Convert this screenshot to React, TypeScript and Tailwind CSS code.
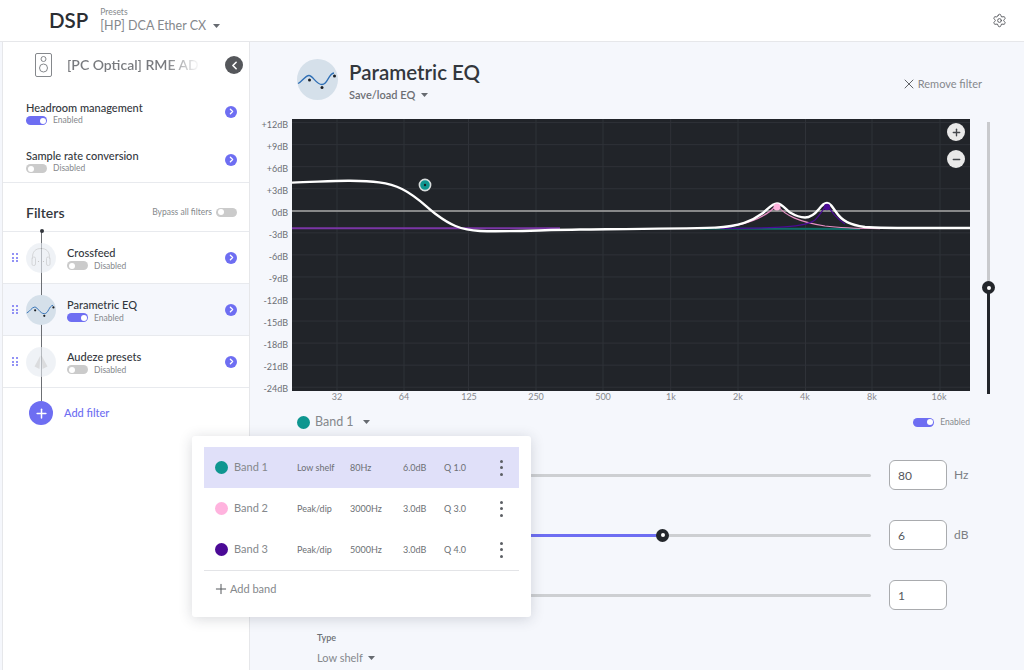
import { ChevronLeft, ChevronRight, Minus, Plus, Settings, X } from "lucide-react";

const yLabels = ["+12dB", "+9dB", "+6dB", "+3dB", "0dB", "-3dB", "-6dB", "-9dB", "-12dB", "-15dB", "-18dB", "-21dB", "-24dB"];
const xLabels = ["32", "64", "125", "250", "500", "1k", "2k", "4k", "8k", "16k"];
const gridX = [337, 404, 468.5, 536, 603, 670.7, 738, 805.5, 872, 940];
const gridY = Array.from({ length: 13 }, (_, i) => 122.6 + i * 22.05);

const bands = [
  { name: "Band 1", color: "bg-[#0e9690]", type: "Low shelf", freq: "80Hz", gain: "6.0dB", q: "Q 1.0", active: true },
  { name: "Band 2", color: "bg-[#ffb3de]", type: "Peak/dip", freq: "3000Hz", gain: "3.0dB", q: "Q 3.0", active: false },
  { name: "Band 3", color: "bg-[#4b0a96]", type: "Peak/dip", freq: "5000Hz", gain: "3.0dB", q: "Q 4.0", active: false },
];

function Caret({ className = "" }: { className?: string }) {
  return (
    <svg width="7" height="4" viewBox="0 0 7 4" className={className}>
      <path d="M0 0h7L3.5 4z" fill="#666a70" />
    </svg>
  );
}

function Toggle({ on }: { on: boolean }) {
  return (
    <div
      className={`flex h-[9px] w-[21px] shrink-0 items-center rounded-full px-[1.5px] ${
        on ? "justify-end bg-[#6e6ef2]" : "justify-start bg-[#cbcbcb]"
      }`}
    >
      <div className="h-[6px] w-[6px] rounded-full bg-white" />
    </div>
  );
}

function Status({ on }: { on: boolean }) {
  return (
    <div className="flex h-[11px] items-center gap-[6px]">
      <Toggle on={on} />
      <span className="text-[8.5px] leading-none text-[#85888c]">{on ? "Enabled" : "Disabled"}</span>
    </div>
  );
}

function NextDot({ className = "" }: { className?: string }) {
  return (
    <div className={`flex h-[12px] w-[12px] shrink-0 items-center justify-center rounded-full bg-[#6e6ef2] ${className}`}>
      <ChevronRight size={9} strokeWidth={3.5} color="white" />
    </div>
  );
}

function EqIcon({ size }: { size: number }) {
  return (
    <svg width={size} height={size} viewBox="0 0 41 41" className="shrink-0">
      <circle cx="20.5" cy="20.5" r="20.5" fill="#d5e0ea" />
      <path d="M1 24.5C5 23 8 16.5 12 16.5S19 25.5 25 25.5 31 15 37 14" fill="none" stroke="#2f6fb5" strokeWidth="1.3" />
      <circle cx="12.5" cy="21" r="1.5" fill="#1c1f24" />
      <circle cx="25" cy="28.5" r="1.5" fill="#1c1f24" />
      <circle cx="37.5" cy="17" r="1.5" fill="#1c1f24" />
    </svg>
  );
}

function HeadphoneIcon() {
  return (
    <svg width="30" height="30" viewBox="0 0 30 30" className="shrink-0">
      <circle cx="15" cy="15" r="15" fill="#e6ebf1" />
      <g fill="none" stroke="#b9bcc0" strokeWidth="1">
        <path d="M6.5 16C6 8 10 5.5 15 5.5S24 8 23.5 16" />
        <rect x="6" y="14" width="3.5" height="8.5" rx="1.5" />
        <rect x="20.5" y="14" width="3.5" height="8.5" rx="1.5" />
      </g>
      <circle cx="12.5" cy="18.5" r="0.6" fill="#999" />
      <circle cx="17.5" cy="18.5" r="0.6" fill="#999" />
    </svg>
  );
}

function AudezeIcon() {
  return (
    <svg width="30" height="30" viewBox="0 0 30 30" className="shrink-0">
      <circle cx="15" cy="15" r="15" fill="#e6ebf1" />
      <path d="M14.4 8.5L8.5 19.5 13.5 22z" fill="#c4c6c9" />
      <path d="M15.6 8.5L21.5 19.5 16.5 22z" fill="#c4c6c9" />
    </svg>
  );
}

function DragDots() {
  return (
    <div className="grid w-[6px] shrink-0 grid-cols-2 gap-[1.5px]">
      {[0, 1, 2, 3, 4, 5].map((i) => (
        <div key={i} className="h-[2px] w-[2px] rounded-full bg-[#6e6ef2]" />
      ))}
    </div>
  );
}

function FilterRow({ name, on, active, icon }: { name: string; on: boolean; active?: boolean; icon: React.ReactNode }) {
  return (
    <div className={`flex h-[52px] items-center border-b border-[#e8eaee] pl-[9px] pr-[12px] ${active ? "bg-[#f5f7fc]" : ""}`}>
      <DragDots />
      <div className="ml-[8px] w-[41px] shrink-0">{icon}</div>
      <div className="flex-1 pt-[1.5px]">
        <div className="text-[11px] font-medium leading-[15px] text-[#33373d]">{name}</div>
        <Status on={on} />
      </div>
      <NextDot />
    </div>
  );
}

function SliderRow({ value, unit, thumb, fill }: { value: string; unit: string; thumb: string; fill?: boolean }) {
  return (
    <div className="flex h-[30px] items-center">
      <div className="relative ml-[67px] h-[3px] w-[554px] rounded-full bg-[#cdcfd2]">
        {fill && <div className="h-[3px] w-[345px] bg-[#6e6ef2]" />}
        <div className={`absolute top-[-5px] flex h-[13px] w-[13px] items-center justify-center rounded-full bg-[#23262b] ${thumb}`}>
          <div className="h-[4px] w-[4px] rounded-full bg-white" />
        </div>
      </div>
      <div className="ml-[18px] flex h-[30px] w-[58px] items-center rounded-[6px] border border-[#a9abae] bg-white pl-[8px] pt-[1px] text-[12px] text-[#55585d]">
        {value}
      </div>
      <span className="ml-[7px] text-[12px] text-[#7b7e83]">{unit}</span>
    </div>
  );
}

function EqChart() {
  return (
    <div className="relative h-[272px] w-[678px] shrink-0 bg-[#212429]">
      <svg width="678" height="272" viewBox="292 119 678 272" className="block">
        {gridX.map((x) => (
          <line key={x} x1={x} x2={x} y1="119" y2="391" stroke="#2f3238" strokeWidth="1" />
        ))}
        {gridY.map((y) => (
          <line key={y} x1="292" x2="970" y1={y} y2={y} stroke="#2f3238" strokeWidth="1" />
        ))}
        <line x1="292" x2="970" y1="211" y2="211" stroke="#a9a9a9" strokeWidth="1.3" />
        <path d="M292 228.3H560" stroke="#7a35a6" strokeWidth="2" fill="none" />
        <path d="M700 228.6C760 228.6 800 229 860 229" stroke="#0f6d68" strokeWidth="2" fill="none" />
        <path d="M715 228C745 226 765 218 777 205C785 216 800 222 825 226C840 228 860 228.5 880 228.6" stroke="#e58fc4" strokeWidth="1.2" fill="none" />
        <path d="M720 228.5C770 228 805 228 815 220C820 215 824 208 827 204C830 210 836 218 845 224" stroke="#4b0a96" strokeWidth="1.2" fill="none" />
        <path
          d="M292 182.6C315 182 335 180.6 350 180.8C372 181 388 182 402 189C418 197 426 207 437 215C449 224 460 230 480 231C510 232 540 230 580 229.5C630 229 680 228.7 715 227.6C740 226.5 752 221 763 213C769 208 772 203.5 777 203.5C782 203.5 785 209 790 212.5C796 216 800 217.5 805 217.5C811 217.5 815 214 819 209C822 205 824 203 827 203C830 203 832 206 836 212C842 221 850 225 865 227C885 228.5 930 228 970 228"
          stroke="#ffffff"
          strokeWidth="2.4"
          fill="none"
        />
        <circle cx="425" cy="185" r="5.6" fill="#0e9690" stroke="#d8dcdc" strokeWidth="1.6" />
        <circle cx="425" cy="185" r="1.2" fill="#1c1f24" />
        <circle cx="777" cy="207" r="3.5" fill="#ffb3de" />
        <circle cx="827" cy="207" r="3.2" fill="#4b0a96" />
      </svg>
      <div className="absolute right-[5px] top-[4px] flex flex-col gap-[9px]">
        <div className="flex h-[18px] w-[18px] items-center justify-center rounded-full bg-[#e9e9e9]">
          <Plus size={11} strokeWidth={3} color="#44474c" />
        </div>
        <div className="flex h-[18px] w-[18px] items-center justify-center rounded-full bg-[#e9e9e9]">
          <Minus size={11} strokeWidth={3} color="#44474c" />
        </div>
      </div>
    </div>
  );
}

function BandMenu() {
  return (
    <div className="absolute left-[192px] top-[436px] z-10 h-[181px] w-[339px] rounded-[3px] bg-white px-[12px] pt-[11px] shadow-[0_2px_14px_rgba(40,45,60,0.18)]">
      {bands.map((b) => (
        <div
          key={b.name}
          className={`grid h-[41px] grid-cols-[19px_63px_53px_53px_41px_56px_auto] items-center pl-[11px] text-[9px] text-[#6c6f74] ${
            b.active ? "bg-[#e0e0f9]" : ""
          }`}
        >
          <div className={`h-[13px] w-[13px] rounded-full ${b.color}`} />
          <span className="text-[11px] text-[#85888c]">{b.name}</span>
          <span>{b.type}</span>
          <span>{b.freq}</span>
          <span>{b.gain}</span>
          <span>{b.q}</span>
          <div className="flex w-[4px] flex-col gap-[3.5px]">
            <div className="h-[3px] w-[3px] rounded-full bg-[#5c5f64]" />
            <div className="h-[3px] w-[3px] rounded-full bg-[#5c5f64]" />
            <div className="h-[3px] w-[3px] rounded-full bg-[#5c5f64]" />
          </div>
        </div>
      ))}
      <div className="flex h-[37px] items-center border-t border-[#e3e4e7] pl-[9px] text-[11px] text-[#85888c]">
        <Plus size={16} strokeWidth={1.5} color="#55585d" />
        <span className="ml-[1px]">Add band</span>
      </div>
    </div>
  );
}

export default function App() {
  return (
    <div className="relative flex h-[670px] w-[1024px] flex-col overflow-hidden bg-white font-['Lato',sans-serif]">
      <header className="flex h-[42px] shrink-0 items-center border-b border-[#e6e7ea] pl-[49px] pr-[17px]">
        <span className="text-[20.5px] font-semibold leading-none text-[#2b2e33]">DSP</span>
        <div className="ml-[12px] flex flex-col">
          <span className="text-[8.5px] leading-[10px] text-[#85888c]">Presets</span>
          <div className="flex items-center gap-[7px] text-[12.5px] leading-[17px] text-[#85888c]">
            [HP] DCA Ether CX
            <Caret />
          </div>
        </div>
        <Settings size={15} strokeWidth={1.5} color="#55585d" className="ml-auto" />
      </header>

      <div className="flex min-h-0 flex-1 bg-[#f5f7fc]">
        <aside className="relative ml-[2px] w-[248px] shrink-0 border-x border-[#e6e7ea] bg-white">
          <div className="absolute bottom-[258px] left-[38px] top-[189px] z-[1] w-[1px] bg-[#6c6f74]" />
          <div className="absolute left-[36.5px] top-[187px] z-[1] h-[4px] w-[4px] rounded-full bg-[#33373d]" />

          <div className="h-[141px] border-b border-[#e8eaee]">
            <div className="flex h-[46px] items-center pl-[32px] pr-[6px]">
              <svg width="17" height="24" viewBox="0 0 17 24" className="shrink-0">
                <rect x="0.5" y="0.5" width="16" height="23" rx="1.5" fill="none" stroke="#85888c" />
                <circle cx="8.5" cy="6" r="2.5" fill="none" stroke="#85888c" />
                <circle cx="8.5" cy="15" r="4" fill="none" stroke="#85888c" />
              </svg>
              <span className="ml-[15px] w-[140px] whitespace-nowrap bg-gradient-to-r from-[#77797d] from-70% to-transparent to-95% bg-clip-text text-[14px] font-semibold leading-[20px] text-transparent">
                [PC Optical] RME ADI
              </span>
              <div className="ml-auto flex h-[18px] w-[18px] items-center justify-center rounded-full bg-[#55575b]">
                <ChevronLeft size={13} strokeWidth={3} color="white" />
              </div>
            </div>
            <div className="mt-[13px] flex flex-col gap-[23px] pl-[23px] pr-[12px]">
              <div className="flex h-[25px] items-center justify-between">
                <div>
                  <div className="text-[11px] font-medium leading-[14px] text-[#33373d]">Headroom management</div>
                  <Status on />
                </div>
                <NextDot className="mb-[4px]" />
              </div>
              <div className="flex h-[25px] items-center justify-between">
                <div>
                  <div className="text-[11px] font-medium leading-[14px] text-[#33373d]">Sample rate conversion</div>
                  <Status on={false} />
                </div>
                <NextDot className="mb-[4px]" />
              </div>
            </div>
          </div>

          <div className="flex h-[49px] items-center justify-between border-b border-[#e8eaee] pl-[23px] pr-[12px] pt-[10px]">
            <span className="text-[14px] font-semibold text-[#33373d]">Filters</span>
            <div className="flex items-center gap-[4px] text-[8.5px] text-[#85888c]">
              Bypass all filters
              <Toggle on={false} />
            </div>
          </div>

          <FilterRow
            name="Crossfeed"
            on={false}
            icon={
              <div className="relative z-[2] w-[30px] opacity-60">
                <HeadphoneIcon />
              </div>
            }
          />
          <FilterRow
            name="Parametric EQ"
            on
            active
            icon={
              <div className="relative z-[2] w-[30px]">
                <EqIcon size={30} />
              </div>
            }
          />
          <FilterRow
            name="Audeze presets"
            on={false}
            icon={
              <div className="relative z-[2] w-[30px] opacity-60">
                <AudezeIcon />
              </div>
            }
          />

          <div className="relative z-[2] flex h-[50px] items-center pl-[26px]">
            <div className="flex h-[24px] w-[24px] items-center justify-center rounded-full bg-[#6e6ef2]">
              <Plus size={15} strokeWidth={2.4} color="white" />
            </div>
            <span className="ml-[11px] text-[11px] font-medium text-[#6e6ef2]">Add filter</span>
          </div>
        </aside>

        <main className="min-w-0 flex-1">
          <div className="flex h-[77px] justify-between pl-[47px] pr-[42px] pt-[17px]">
            <div className="flex gap-[11px]">
              <EqIcon size={41} />
              <div>
                <div className="text-[20.5px] font-semibold leading-[26px] text-[#33373d]">Parametric EQ</div>
                <div className="mt-[3px] flex items-center gap-[6px] text-[11px] font-semibold leading-[14px] text-[#6c6f74]">
                  Save/load EQ
                  <Caret />
                </div>
              </div>
            </div>
            <div className="mt-[18px] flex h-[14px] items-center text-[11px] text-[#85888c]">
              <X size={16} strokeWidth={1.4} color="#55585d" />
              <span className="ml-[1px]">Remove filter</span>
            </div>
          </div>

          <div className="flex h-[272px]">
            <div className="mt-[-5.5px] ml-[2px] w-[36px] shrink-0 text-right text-[9px] leading-[22.05px] text-[#6c6f74]">
              {yLabels.map((l) => (
                <div key={l} className="h-[22.05px]">
                  {l}
                </div>
              ))}
            </div>
            <div className="ml-[4px]">
              <EqChart />
            </div>
            <div className="relative ml-[17px] mt-[3px] h-[272px] w-[3px] bg-[#c9cacd]">
              <div className="absolute bottom-0 top-[165px] w-[3px] bg-[#23262b]" />
              <div className="absolute left-[-5px] top-[159px] flex h-[13px] w-[13px] items-center justify-center rounded-full bg-[#23262b]">
                <div className="h-[4px] w-[4px] rounded-full bg-white" />
              </div>
            </div>
          </div>

          <div className="ml-[53.5px] flex h-[12px] items-center text-[9px] text-[#85888c]">
            {xLabels.map((l) => (
              <div
                key={l}
                className={`w-[67px] shrink-0 text-center ${l === "125" ? "ml-[-2px]" : ""} ${l === "1k" ? "ml-[1px]" : ""}`}
              >
                {l}
              </div>
            ))}
          </div>

          <div className="mt-[9px] flex h-[20px] items-center pl-[47px] pr-[54px]">
            <div className="h-[13px] w-[13px] rounded-full bg-[#0e9690]" />
            <span className="ml-[5px] text-[12.5px] text-[#85888c]">Band 1</span>
            <Caret className="ml-[9px]" />
            <div className="ml-auto flex items-center gap-[6px] text-[8.5px] text-[#85888c]">
              <Toggle on />
              Enabled
            </div>
          </div>

          <div className="mt-[28px] flex flex-col gap-[30px]">
            <SliderRow value="80" unit="Hz" thumb="left-[90px]" />
            <SliderRow value="6" unit="dB" thumb="left-[339px]" fill />
            <SliderRow value="1" unit="" thumb="left-[100px]" />
          </div>

          <div className="ml-[67px] mt-[22px] text-[9px] font-semibold leading-[12px] text-[#6c6f74]">Type</div>
          <div className="ml-[67px] mt-[6px] flex items-center gap-[5px] text-[11px] leading-[16px] text-[#85888c]">
            Low shelf
            <Caret />
          </div>
        </main>
      </div>

      <BandMenu />
    </div>
  );
}
